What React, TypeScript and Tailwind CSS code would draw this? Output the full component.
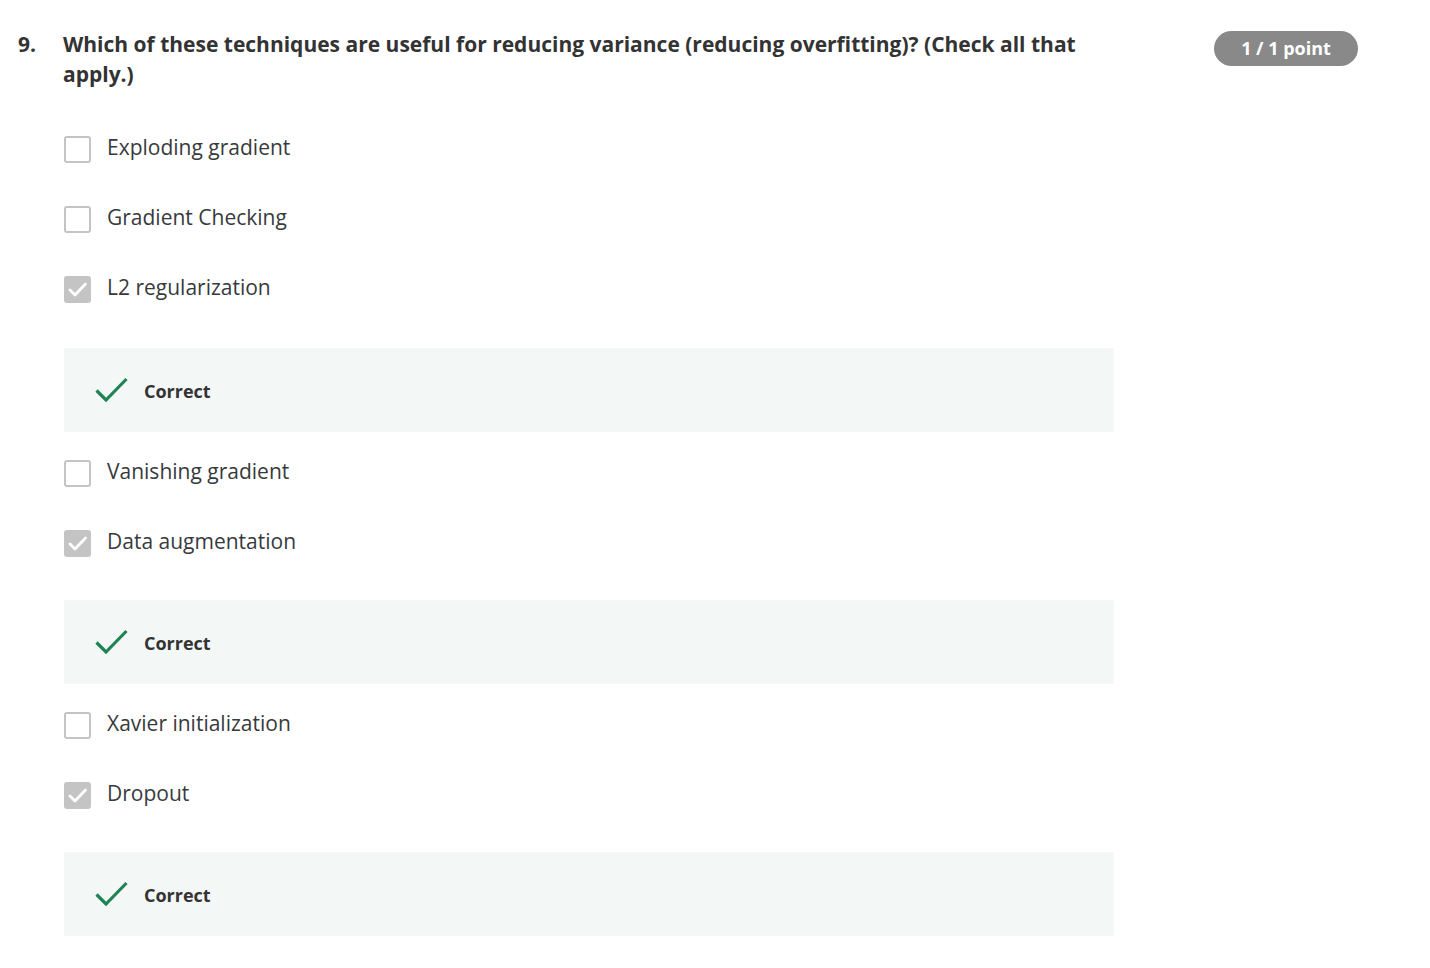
import React from "react";

type Item = { label: string; checked: boolean };

const items: Item[] = [
  { label: "Exploding gradient", checked: false },
  { label: "Gradient Checking", checked: false },
  { label: "L2 regularization", checked: true },
  { label: "Vanishing gradient", checked: false },
  { label: "Data augmentation", checked: true },
  { label: "Xavier initialization", checked: false },
  { label: "Dropout", checked: true },
];

function Box({ checked }: { checked: boolean }) {
  if (checked) {
    return (
      <div className="w-[27px] h-[27px] rounded-[3px] bg-[#c4c4c4] flex items-center justify-center shrink-0">
        <svg width="23" height="23" viewBox="0 0 23 23" fill="none">
          <path d="M4 12 L9 17 L19.5 6" stroke="white" strokeWidth="2.8" strokeLinecap="round" strokeLinejoin="round" />
        </svg>
      </div>
    );
  }
  return <div className="w-[27px] h-[27px] rounded-[3px] border-2 border-[#c4c4c4] bg-white shrink-0" />;
}

function Option({ item }: { item: Item }) {
  return (
    <div className="h-[70px] flex items-center gap-[16px] ml-[1px]">
      <div className="mt-[4px]">
        <Box checked={item.checked} />
      </div>
      <span className="text-[21px] text-[#373a3c] leading-none">{item.label}</span>
    </div>
  );
}

function Correct({ mt }: { mt: string }) {
  return (
    <div className={`${mt} ml-[1px] h-[84px] w-[1050px] bg-[#f3f8f7] flex items-center pl-[31px] gap-[16px]`}>
      <svg width="33" height="26" viewBox="0 0 33 26" fill="none">
        <path d="M1.5 13.5 L11 23 L31.5 2" stroke="#1f8354" strokeWidth="3.2" />
      </svg>
      <span className="text-[18px] font-bold text-[#333] mt-[2px]">Correct</span>
    </div>
  );
}

export default function App() {
  return (
    <div className="w-[1430px] h-[968px] bg-white overflow-hidden" style={{ fontFamily: '"Open Sans", sans-serif' }}>
      <div className="flex pt-[29px]">
        <div className="w-[63px] pl-[18px] text-[21px] font-bold text-[#333] leading-[30px]">9.</div>
        <div className="flex-1">
          <div className="flex">
            <div className="w-[1030px] text-[21px] font-bold text-[#333] leading-[30px]">
              Which of these techniques are useful for reducing variance (reducing overfitting)? (Check all that apply.)
            </div>
            <div className="ml-[121px] mt-[2px] h-[35px] w-[144px] rounded-full bg-[#898989] text-white text-[18px] font-bold flex items-center justify-center">
              1 / 1 point
            </div>
          </div>
          <div className="mt-[23px]">
            <Option item={items[0]} />
            <Option item={items[1]} />
            <Option item={items[2]} />
            <Correct mt="mt-[26px]" />
            <div className="mt-[4px]">
              <Option item={items[3]} />
              <Option item={items[4]} />
            </div>
            <Correct mt="mt-[24px]" />
            <div className="mt-[4px]">
              <Option item={items[5]} />
              <Option item={items[6]} />
            </div>
            <Correct mt="mt-[24px]" />
          </div>
        </div>
      </div>
    </div>
  );
}
